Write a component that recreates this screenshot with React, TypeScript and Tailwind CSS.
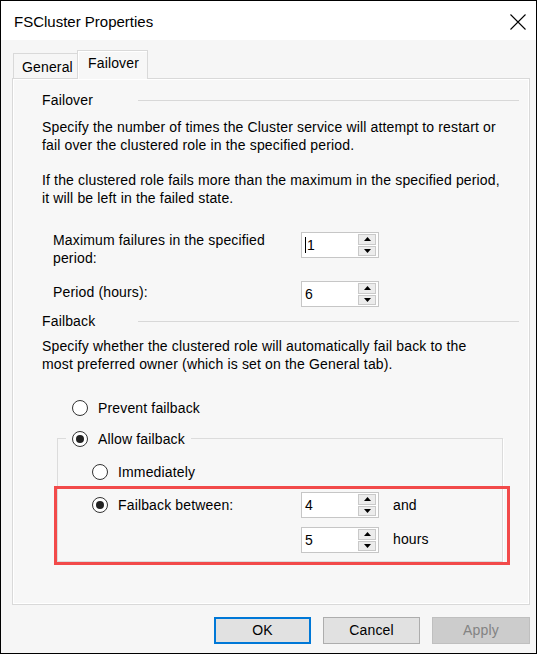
import React from 'react';

const font = { fontFamily: '"Liberation Sans", Arial, sans-serif' };

function Spin({ value, caret }: { value: string; caret?: boolean }) {
  return (
    <div className="w-[78px] h-[26px] border border-[#c6c6c6] bg-white flex shrink-0">
      <div className="flex-1 flex items-center pl-[3px] text-[14px] leading-[16px] text-black">
        {caret && <span className="w-px h-[16px] bg-black mr-[1px]" />}
        {value}
      </div>
      <div className="w-[18px] flex flex-col gap-px py-px mr-[2px]">
        <div className="flex-1 bg-[#ececec] border border-[#c9c9c9] flex items-center justify-center">
          <svg width="7" height="4" viewBox="0 0 7 4"><path d="M3.5 0L7 4H0z" fill="#000" /></svg>
        </div>
        <div className="flex-1 bg-[#ececec] border border-[#c9c9c9] flex items-center justify-center">
          <svg width="7" height="4" viewBox="0 0 7 4"><path d="M0 0H7L3.5 4z" fill="#000" /></svg>
        </div>
      </div>
    </div>
  );
}

function Radio({ checked, label }: { checked?: boolean; label: string }) {
  return (
    <div className="flex items-center h-[18px]">
      <span className="w-[16px] h-[16px] rounded-full border border-[#333] bg-white flex items-center justify-center mr-[10px]">
        {checked && <span className="w-[8px] h-[8px] rounded-full bg-[#222]" />}
      </span>
      <span className="leading-[18px]">{label}</span>
    </div>
  );
}

function Heading({ label }: { label: string }) {
  return (
    <div className="flex items-center h-[16px] pl-[29px] pr-[10px]">
      <span className="w-[96px] leading-[16px]">{label}</span>
      <span className="flex-1 h-px bg-[#d8d8d8]" />
    </div>
  );
}

export default function App() {
  return (
    <div className="w-[537px] h-[654px] border border-black bg-[#f6f6f6] flex flex-col text-black text-[14px] tracking-[0.15px]" style={font}>
      {/* title bar */}
      <div className="h-[39px] bg-white flex items-center justify-between pl-[13px] pr-[10px]">
        <span className="text-[15px] leading-[18px] mt-[2px] tracking-normal">FSCluster Properties</span>
        <svg width="16" height="16" viewBox="0 0 16 16" className="mt-[3px]">
          <path d="M0.5 0.5L15.5 15.5M15.5 0.5L0.5 15.5" stroke="#000" strokeWidth="1.1" />
        </svg>
      </div>

      {/* tabs */}
      <div className="flex items-end h-[29px] mt-[10px] ml-[12px] -mb-px relative z-10">
        <div className="w-[64px] h-[26px] border border-r-0 border-b-0 border-[#d9d9d9] pl-[8px] pt-[5px] leading-[16px]">General</div>
        <div className="w-[71px] h-[29px] border border-b-0 border-[#d9d9d9] bg-[#f7f7f7] pl-[10px] pt-[4px] leading-[16px] shadow-[inset_1px_1px_0_#fff]">Failover</div>
      </div>

      {/* panel */}
      <div className="ml-[11px] w-[518px] h-[527px] border border-[#d9d9d9] bg-[#f7f7f7] shadow-[inset_1px_1px_0_#fff,inset_-1px_-1px_0_#fff] flex flex-col">
        <div className="mt-[13px]">
          <Heading label="Failover" />
        </div>
        <p className="mt-[10px] pl-[29px] leading-[18px]">
          Specify the number of times the Cluster service will attempt to restart or
          <br />
          fail over the clustered role in the specified period.
        </p>
        <p className="mt-[17px] pl-[29px] leading-[18px]">
          If the clustered role fails more than the maximum in the specified period,
          <br />
          it will be left in the failed state.
        </p>

        <div className="mt-[24px] flex items-start pl-[40px]">
          <div className="w-[248px] leading-[18px]">
            Maximum failures in the specified
            <br />
            period:
          </div>
          <div className="mt-[1px]">
            <Spin value="1" caret />
          </div>
        </div>
        <div className="mt-[14px] flex items-start pl-[40px]">
          <div className="w-[248px] leading-[18px] pt-[2px]">Period (hours):</div>
          <Spin value="6" />
        </div>

        <div className="mt-[6px]">
          <Heading label="Failback" />
        </div>
        <p className="mt-[8px] pl-[29px] leading-[18px]">
          Specify whether the clustered role will automatically fail back to the
          <br />
          most preferred owner (which is set on the General tab).
        </p>

        <div className="mt-[26px] pl-[59px]">
          <Radio label="Prevent failback" />
        </div>

        {/* allow failback group */}
        <div className="relative mt-[21px] ml-[44px] w-[446px] border border-[#dcdcdc] shadow-[1px_1px_0_#fff] pb-[8px]">
          <div className="-mt-[9px] ml-[8px] w-fit bg-[#f7f7f7] px-[6px]">
            <Radio checked label="Allow failback" />
          </div>
          <div className="mt-[15px] pl-[34px]">
            <Radio label="Immediately" />
          </div>
          <div className="mt-[11px] flex items-start pl-[34px]">
            <div className="w-[209px] pt-[4px]">
              <Radio checked label="Failback between:" />
            </div>
            <Spin value="4" />
            <span className="ml-[14px] pt-[4px] leading-[18px]">and</span>
          </div>
          <div className="mt-[9px] flex items-start pl-[243px]">
            <Spin value="5" />
            <span className="ml-[14px] pt-[3px] leading-[18px]">hours</span>
          </div>

          {/* highlight annotation */}
          <div className="absolute left-[-4px] top-[47px] w-[456px] h-[79px] border-[3px] border-[#f24a4a] pointer-events-none" />
        </div>
      </div>

      {/* buttons */}
      <div className="mt-[12px] flex justify-end gap-[12px] pr-[6px]">
        <button className="w-[97px] h-[27px] bg-[#e1e1e1] border-2 border-[#0078d7]">OK</button>
        <button className="w-[97px] h-[27px] bg-[#e1e1e1] border border-[#adadad]">Cancel</button>
        <button className="w-[98px] h-[27px] bg-[#cccccc] border border-[#bfbfbf] text-[#838383]">Apply</button>
      </div>
    </div>
  );
}
